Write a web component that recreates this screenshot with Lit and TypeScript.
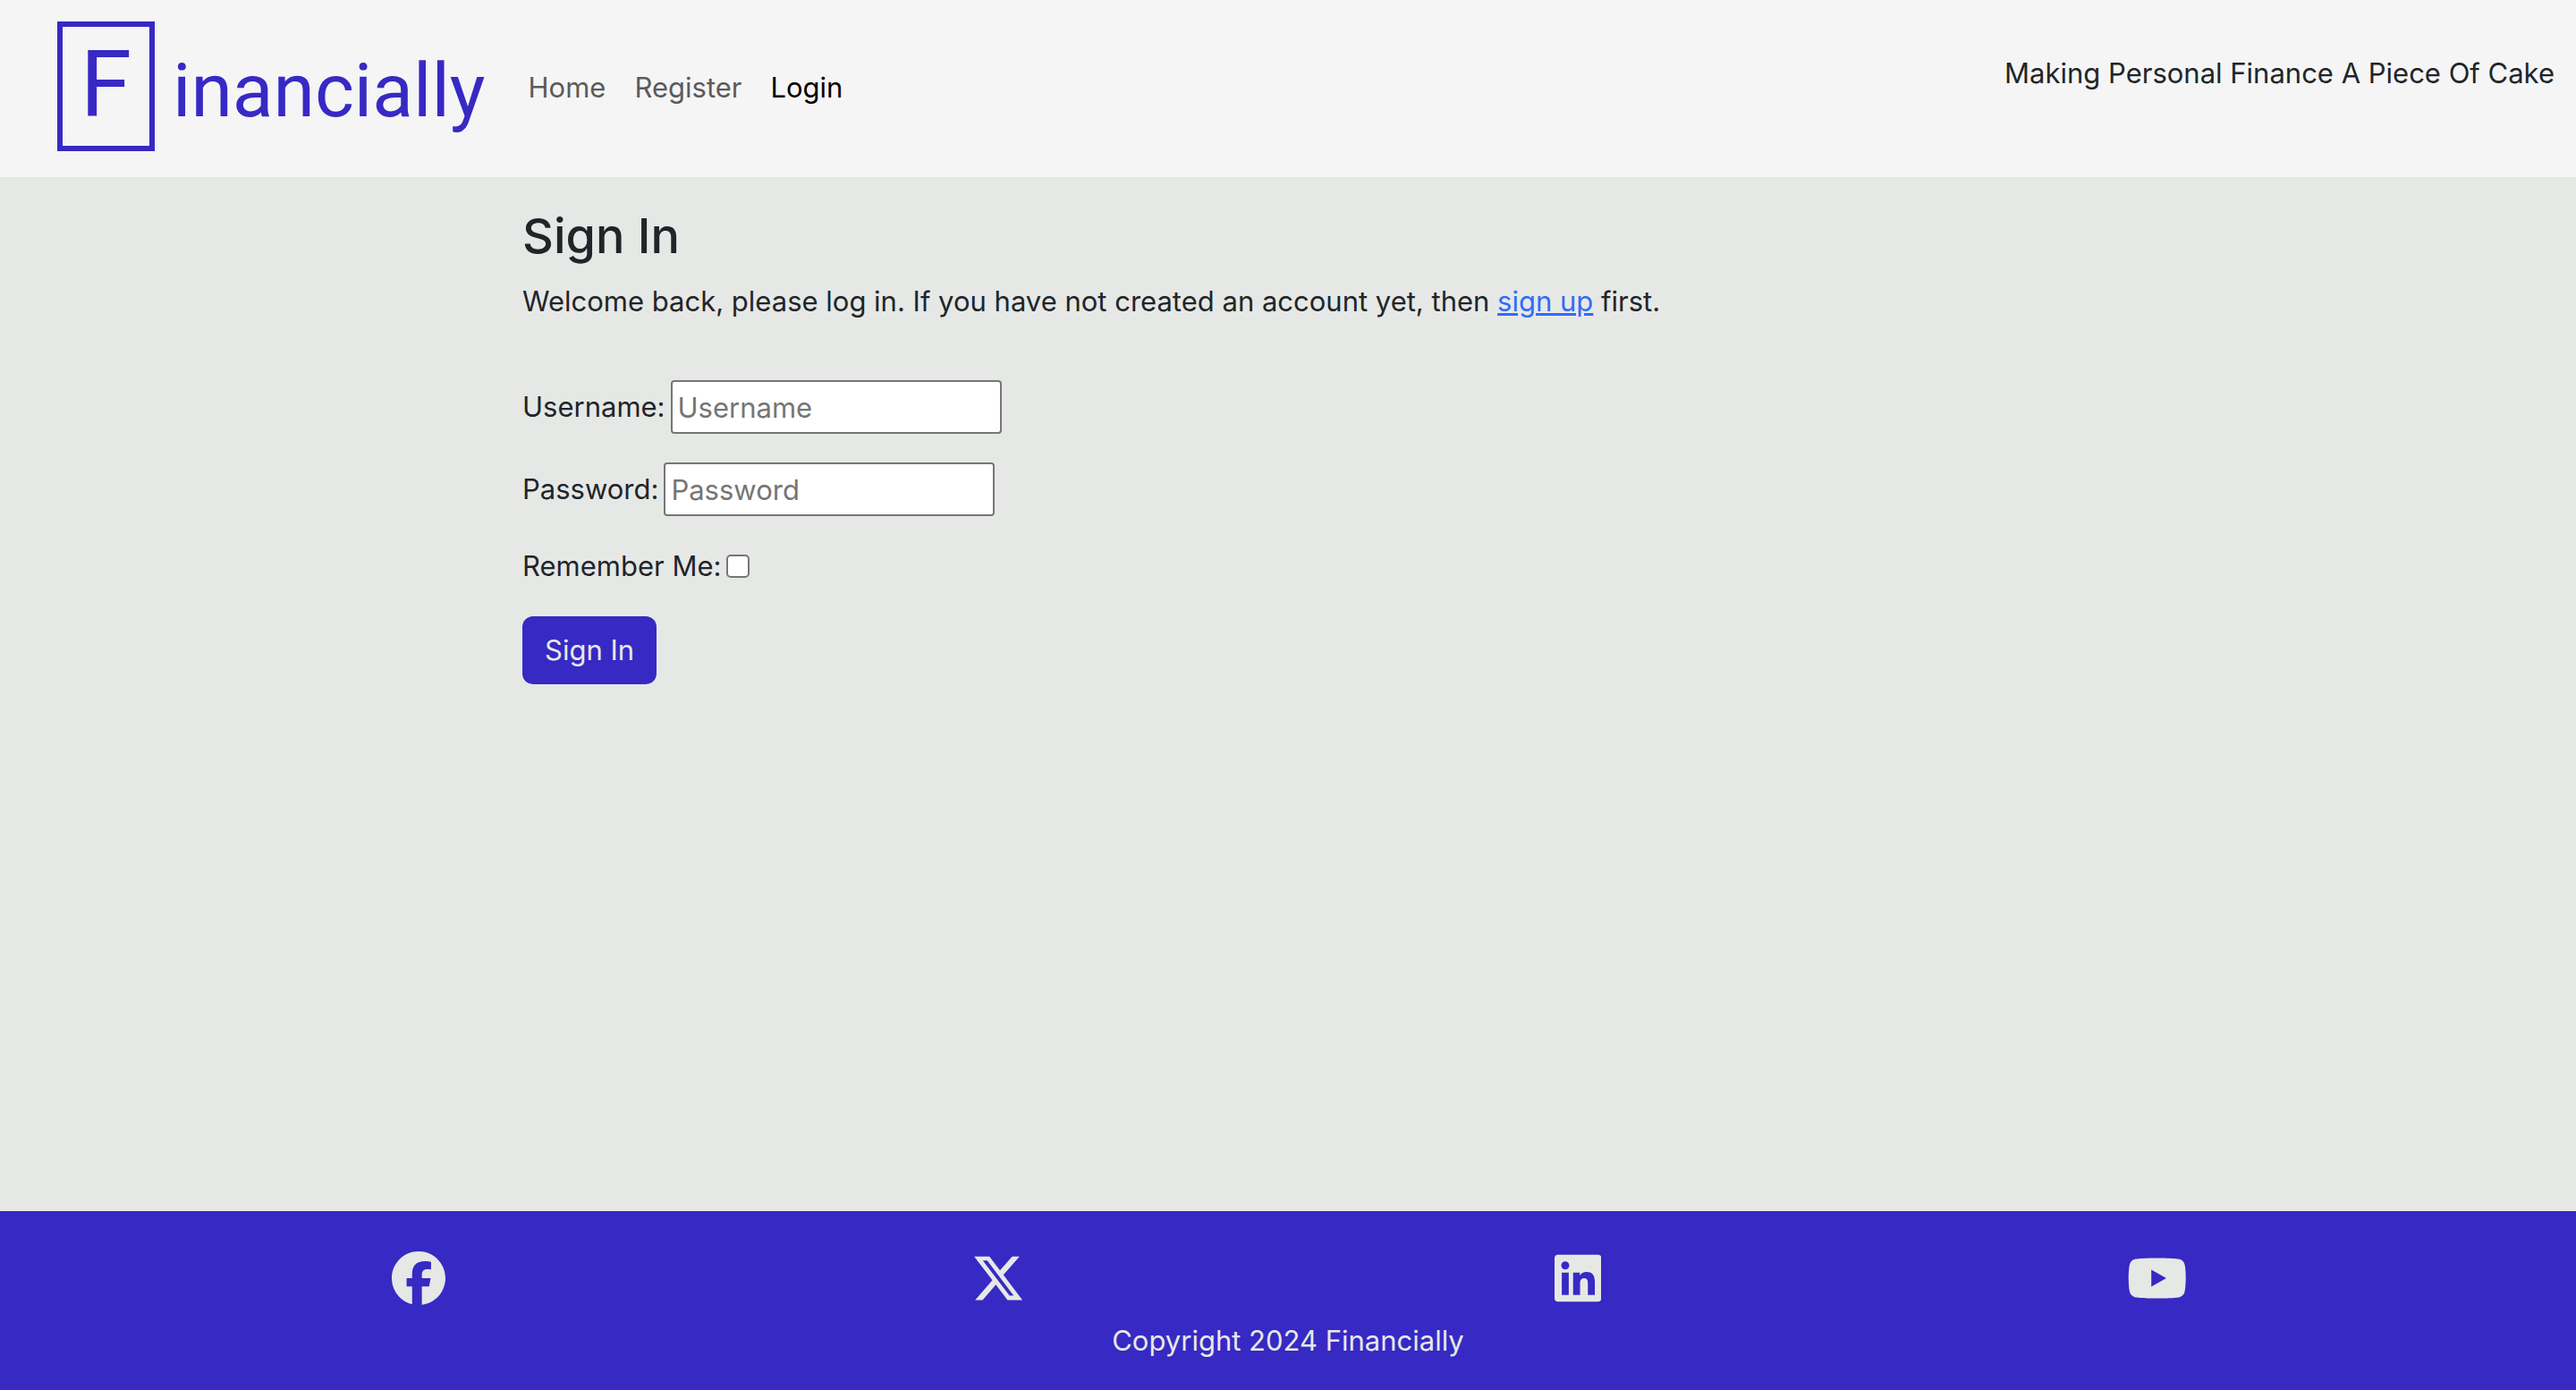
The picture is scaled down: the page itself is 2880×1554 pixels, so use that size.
import { LitElement, html, css, svg } from "lit";
import { customElement } from "lit/decorators.js";

const facebook = svg`<path d="M512 256C512 114.6 397.4 0 256 0S0 114.6 0 256C0 376 82.7 476.8 194.2 504.5V334.2H141.4V256h52.8V222.3c0-87.1 39.4-127.5 125-127.5c16.2 0 44.2 3.2 55.7 6.4V172c-6-.6-16.5-1-29.6-1c-42 0-58.2 15.9-58.2 57.2V256h83.6l-14.4 78.2H287V510.1C413.8 494.8 512 386.9 512 256z"/>`;
const xTwitter = svg`<path d="M389.2 48h70.6L305.6 224.2 487 464H345L233.7 318.6 106.5 464H35.8L200.7 275.5 26.8 48H172.4L272.9 180.9 389.2 48zM364.4 421.8h39.1L151.1 88h-42L364.4 421.8z"/>`;
const linkedin = svg`<path d="M416 32H31.9C14.3 32 0 46.5 0 64.3v383.4C0 465.5 14.3 480 31.9 480H416c17.6 0 32-14.5 32-32.3V64.3c0-17.8-14.4-32.3-32-32.3zM135.4 416H69V202.2h66.5V416zm-33.2-243c-21.3 0-38.5-17.3-38.5-38.5S80.9 96 102.2 96c21.2 0 38.5 17.3 38.5 38.5 0 21.3-17.2 38.5-38.5 38.5zm282.1 243h-66.4V312c0-24.8-.5-56.7-34.5-56.7-34.6 0-39.9 27-39.9 54.9V416h-66.4V202.2h63.7v29.2h.9c8.9-16.8 30.6-34.5 62.9-34.5 67.2 0 79.7 44.3 79.7 101.9V416z"/>`;
const youtube = svg`<path d="M549.655 124.083c-6.281-23.65-24.787-42.276-48.284-48.597C458.781 64 288 64 288 64S117.22 64 74.629 75.486c-23.497 6.322-42.003 24.947-48.284 48.597-11.412 42.867-11.412 132.305-11.412 132.305s0 89.438 11.412 132.305c6.281 23.65 24.787 41.5 48.284 47.821C117.22 448 288 448 288 448s170.78 0 213.371-11.486c23.497-6.321 42.003-24.171 48.284-47.821 11.412-42.867 11.412-132.305 11.412-132.305s0-89.438-11.412-132.305zm-317.51 213.508V175.185l142.739 81.205-142.739 81.201z"/>`;

const socials = [
  { name: "Facebook", box: "0 0 512 512", icon: facebook },
  { name: "X", box: "0 0 512 512", icon: xTwitter },
  { name: "LinkedIn", box: "0 0 448 512", icon: linkedin },
  { name: "YouTube", box: "0 0 576 512", icon: youtube },
];

@customElement("site-header")
export class SiteHeader extends LitElement {
  static styles = css`
    :host {
      display: block;
      background: #f5f5f5;
    }
    .bar {
      display: flex;
      align-items: flex-start;
      padding: 24px 24px 29px 64px;
    }
    .brand {
      display: flex;
      align-items: baseline;
      gap: 20px;
      color: #3729c4;
      font-family: Roboto, sans-serif;
      font-size: 84px;
      line-height: 129px;
      text-decoration: none;
    }
    .initial {
      box-sizing: border-box;
      width: 109px;
      padding-bottom: 4px;
      border: 6px solid currentColor;
      font-size: 104px;
      text-align: center;
    }
    .links {
      display: flex;
      gap: 32px;
      margin: 50px 0 0 48px;
      padding: 0;
      list-style: none;
    }
    .link {
      color: #5b5b5b;
      text-decoration: none;
    }
    .link.active {
      color: #000;
    }
    .tagline {
      margin: 34px 0 0 auto;
    }
  `;

  render() {
    return html`
      <header class="bar">
        <a class="brand" href="#home"><span class="initial">F</span><span>inancially</span></a>
        <nav>
          <ul class="links">
            <li><a class="link" href="#home">Home</a></li>
            <li><a class="link" href="#register">Register</a></li>
            <li><a class="link active" href="#login" aria-current="page">Login</a></li>
          </ul>
        </nav>
        <p class="tagline">Making Personal Finance A Piece Of Cake</p>
      </header>
    `;
  }
}

@customElement("sign-in-form")
export class SignInForm extends LitElement {
  static styles = css`
    :host {
      display: block;
    }
    .title {
      margin: 0 0 16px;
      font-size: 54px;
      font-weight: 500;
      line-height: 66px;
    }
    .intro {
      margin: 0 0 64px;
    }
    .signup {
      color: #316bfb;
    }
    .form {
      display: flex;
      flex-direction: column;
      align-items: flex-start;
    }
    .field {
      display: flex;
      align-items: center;
      gap: 6px;
      margin-bottom: 32px;
    }
    .text {
      box-sizing: border-box;
      width: 370px;
      height: 60px;
      padding: 2px 6px;
      border: 2px solid #767676;
      border-radius: 4px;
      background: #fff;
      color: #212529;
      font: inherit;
    }
    .text::placeholder {
      color: #757575;
      opacity: 1;
    }
    .check {
      appearance: none;
      width: 26px;
      height: 26px;
      margin: 0;
      border: 2px solid #767676;
      border-radius: 5px;
      background: #fff;
    }
    .check:checked {
      background: #3729c4;
    }
    .submit {
      padding: 14px 25px;
      border: 0;
      border-radius: 12px;
      background: #3729c4;
      color: #e6e8e6;
      font: inherit;
    }
  `;

  render() {
    return html`
      <h1 class="title">Sign In</h1>
      <p class="intro">
        Welcome back, please log in. If you have not created an account yet, then
        <a class="signup" href="#register">sign up</a> first.
      </p>
      <form class="form" @submit=${(e: Event) => e.preventDefault()}>
        <div class="field">
          <label for="username">Username:</label>
          <input class="text" id="username" type="text" placeholder="Username" />
        </div>
        <div class="field">
          <label for="password">Password:</label>
          <input class="text" id="password" type="password" placeholder="Password" />
        </div>
        <div class="field">
          <label for="remember">Remember Me:</label>
          <input class="check" id="remember" type="checkbox" />
        </div>
        <button class="submit" type="submit">Sign In</button>
      </form>
    `;
  }
}

@customElement("site-footer")
export class SiteFooter extends LitElement {
  static styles = css`
    :host {
      display: block;
      background: #3729c4;
      color: #e6e8e6;
    }
    .footer {
      padding: 45px 5% 31px;
    }
    .socials {
      display: grid;
      grid-template-columns: repeat(4, 1fr);
      margin: 0 0 16px;
      padding: 0;
      list-style: none;
    }
    .item {
      display: flex;
      justify-content: center;
    }
    .social {
      display: flex;
      color: inherit;
    }
    .icon {
      height: 60px;
      fill: currentColor;
    }
    .copy {
      margin: 0;
      text-align: center;
    }
  `;

  render() {
    return html`
      <footer class="footer">
        <ul class="socials">
          ${socials.map(
            (s) => html`
              <li class="item">
                <a class="social" href="#${s.name.toLowerCase()}" aria-label=${s.name}>
                  <svg class="icon" viewBox=${s.box} aria-hidden="true">${s.icon}</svg>
                </a>
              </li>
            `
          )}
        </ul>
        <p class="copy">Copyright 2024 Financially</p>
      </footer>
    `;
  }
}

@customElement("app-root")
export class AppRoot extends LitElement {
  static styles = css`
    :host {
      display: flex;
      flex-direction: column;
      min-height: 100vh;
      background: #e6e8e6;
      color: #212529;
      font-family: Inter, "Liberation Sans", sans-serif;
      font-size: 31px;
      line-height: 48px;
    }
    .main {
      flex: 1;
      display: grid;
      grid-template-columns: repeat(12, 1fr);
      align-content: start;
      box-sizing: border-box;
      width: 100%;
      max-width: 2640px;
      margin: 0 auto;
      padding: 33px 0;
    }
    .column {
      grid-column: 3 / 11;
      padding: 0 24px;
    }
  `;

  render() {
    return html`
      <site-header></site-header>
      <main class="main">
        <sign-in-form class="column"></sign-in-form>
      </main>
      <site-footer></site-footer>
    `;
  }
}
